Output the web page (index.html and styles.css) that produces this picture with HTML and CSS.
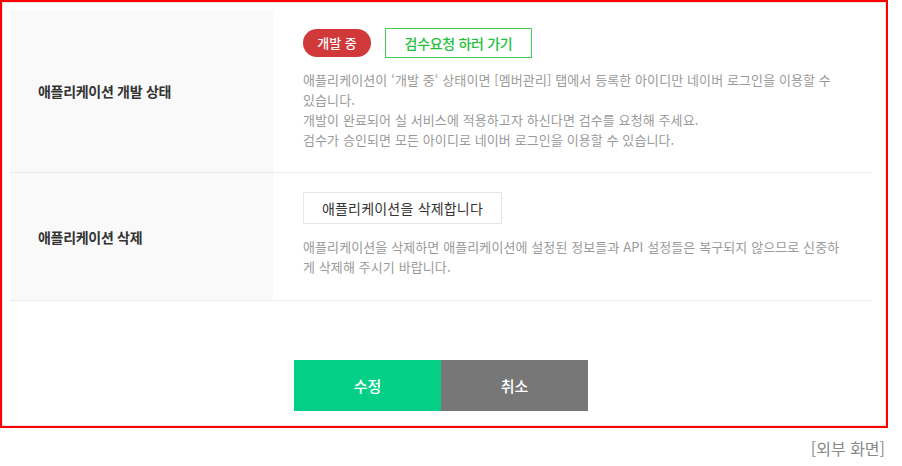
FILE: index.html
```html
<!DOCTYPE html>
<html lang="ko">
<head>
    <meta charset="UTF-8">
    <meta name="viewport" content="width=device-width, initial-scale=1.0">
    <title>애플리케이션 설정</title>
    <link rel="stylesheet" href="styles.css">
</head>
<body>

    <!-- 캡처 영역 -->
    <div class="frame">
        <div class="setting-table">
            <div class="setting-row row-status">
                <div class="setting-label">애플리케이션 개발 상태</div>
                <div class="setting-value">
                    <div class="status-line">
                        <span class="badge-dev">개발 중</span>
                        <a class="btn-review" href="#">검수요청 하러 가기</a>
                    </div>
                    <p class="desc">애플리케이션이 ‘개발 중‘ 상태이면 [멤버관리] 탭에서 등록한 아이디만 네이버 로그인을 이용할 수 있습니다.<br>개발이 완료되어 실 서비스에 적용하고자 하신다면 검수를 요청해 주세요.<br>검수가 승인되면 모든 아이디로 네이버 로그인을 이용할 수 있습니다.</p>
                </div>
            </div>
            <div class="setting-row row-delete">
                <div class="setting-label">애플리케이션 삭제</div>
                <div class="setting-value">
                    <button class="btn-delete">애플리케이션을 삭제합니다</button>
                    <p class="desc">애플리케이션을 삭제하면 애플리케이션에 설정된 정보들과 API 설정들은 복구되지 않으므로 신중하게 삭제해 주시기 바랍니다.</p>
                </div>
            </div>
        </div>

        <div class="actions">
            <button class="btn-save">수정</button>
            <button class="btn-cancel">취소</button>
        </div>
    </div>

    <p class="caption">[외부 화면]</p>

</body>
</html>
```

FILE: styles.css
```css
* {
    margin: 0;
    padding: 0;
    box-sizing: border-box;
    font-family: "Noto Sans CJK KR", "Noto Sans", sans-serif;
}
body {
    background: #fff;
    color: #333;
}
.frame {
    width: 888px;
    height: 428px;
    border: 2px solid #f00;
    box-shadow: inset 0 0 0 1px #e4e4e4;
    padding: 8px 14px 0 8px;
}
.setting-table {
    width: 862px;
}
.setting-row {
    display: flex;
    border-bottom: 1px solid #ebebeb;
}
.row-status {
    height: 163px;
}
.row-delete {
    height: 128px;
}
.setting-label {
    flex-shrink: 0;
    width: 263px;
    background: #f9f9f9;
    display: flex;
    align-items: center;
    padding-left: 28px;
    font-size: 14px;
    font-weight: bold;
    color: #333;
    letter-spacing: -0.3px;
}
.setting-value {
    flex: 1;
    padding: 18px 20px 0 30px;
}
.row-delete .setting-value {
    padding-top: 19px;
}
.status-line {
    display: flex;
    align-items: center;
    gap: 14px;
}
.badge-dev {
    display: inline-block;
    width: 68px;
    height: 28px;
    line-height: 28px;
    border-radius: 14px;
    background: #d0383a;
    color: #fff;
    font-size: 13px;
    font-weight: 500;
    text-align: center;
}
.btn-review {
    display: inline-block;
    width: 147px;
    height: 30px;
    line-height: 28px;
    border: 1px solid #3fcf57;
    color: #1ec13a;
    font-size: 14px;
    font-weight: 500;
    text-align: center;
    text-decoration: none;
    letter-spacing: -0.3px;
}
.desc {
    margin-top: 12px;
    width: 542px;
    font-size: 13px;
    line-height: 20px;
    color: #9a9a9a;
    letter-spacing: 0.1px;
}
.btn-delete {
    width: 199px;
    height: 32px;
    background: #fff;
    border: 1px solid #e6e6e6;
    font-size: 14px;
    color: #333;
    letter-spacing: 0.2px;
}
.row-delete .desc {
    margin-top: 13px;
}
.actions {
    display: flex;
    justify-content: center;
    margin-top: 59px;
}
.actions button {
    width: 147px;
    height: 51px;
    border: none;
    color: #fff;
    font-size: 15px;
    font-weight: 500;
}
.btn-save {
    background: #04cf87;
}
.btn-cancel {
    background: #777;
}
.caption {
    width: 885px;
    margin-top: 8px;
    text-align: right;
    font-size: 16px;
    color: #888;
}
```
